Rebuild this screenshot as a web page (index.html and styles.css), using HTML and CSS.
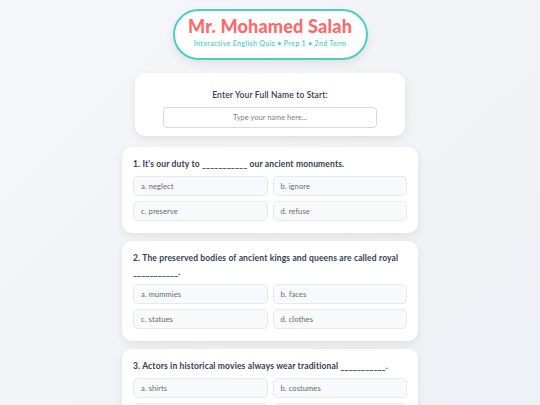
FILE: index.html
```html
<!DOCTYPE html>
<html lang="en">
<head>
<meta charset="utf-8">
<title>Mr. Mohamed Salah – Interactive English Quiz</title>
<link rel="stylesheet" href="styles.css">
</head>
<body>
<main class="page">
  <header class="brand">
    <h1 class="brand-title">Mr. Mohamed Salah</h1>
    <p class="brand-sub">Interactive English Quiz • Prep 1 • 2nd Term</p>
  </header>

  <section class="name-card">
    <label class="name-label" for="student">Enter Your Full Name to Start:</label>
    <input class="name-input" id="student" type="text" placeholder="Type your name here...">
  </section>

  <section class="q-card">
    <p class="q-text">1. It's our duty to ___________ our ancient monuments.</p>
    <div class="options">
      <div class="opt">a. neglect</div>
      <div class="opt">b. ignore</div>
      <div class="opt">c. preserve</div>
      <div class="opt">d. refuse</div>
    </div>
  </section>

  <section class="q-card">
    <p class="q-text">2. The preserved bodies of ancient kings and queens are called royal ___________.</p>
    <div class="options">
      <div class="opt">a. mummies</div>
      <div class="opt">b. faces</div>
      <div class="opt">c. statues</div>
      <div class="opt">d. clothes</div>
    </div>
  </section>

  <section class="q-card">
    <p class="q-text">3. Actors in historical movies always wear traditional ___________.</p>
    <div class="options">
      <div class="opt">a. shirts</div>
      <div class="opt">b. costumes</div>
      <div class="opt">c. hats</div>
      <div class="opt">d. shoes</div>
    </div>
  </section>
</main>
</body>
</html>
```

FILE: styles.css
```css
* { box-sizing: border-box; }

html, body {
  margin: 0;
  padding: 0;
}

body {
  background: linear-gradient(135deg, #f5f7fa 0%, #edf0f4 100%);
  min-height: 100vh;
  font-family: "Lato", "Open Sans", sans-serif;
  color: #2d3436;
}

.page {
  width: 296px;
  margin: 0 auto;
  padding-top: 9px;
  display: flex;
  flex-direction: column;
  align-items: center;
}

.brand {
  width: 195px;
  height: 51px;
  border: 2px solid #4ecdc4;
  border-radius: 26px;
  background: #ffffff;
  box-shadow: 0 4px 10px rgba(0, 0, 0, 0.08);
  text-align: center;
  padding-top: 5px;
}

.brand-title {
  margin: 0;
  font-family: "Lato", sans-serif;
  font-weight: 900;
  font-size: 18px;
  line-height: 20px;
  color: #ff6b6b;
  letter-spacing: 0.2px;
}

.brand-sub {
  margin: 2px 0 0;
  font-size: 7px;
  line-height: 10px;
  color: #4ecdc4;
  font-weight: 600;
  letter-spacing: 0.35px;
}

.name-card {
  margin-top: 13px;
  width: 270px;
  height: 63px;
  background: #ffffff;
  border-radius: 10px;
  box-shadow: 0 3px 8px rgba(0, 0, 0, 0.08);
  padding-top: 16px;
  display: flex;
  flex-direction: column;
  align-items: center;
}

.name-label {
  font-size: 8.5px;
  line-height: 12px;
  font-weight: 600;
  color: #34404f;
  margin-bottom: 6px;
  letter-spacing: 0.15px;
}

.name-input {
  width: 214px;
  height: 21px;
  border: 1px solid #d5d9de;
  border-radius: 4px;
  font-family: "Lato", sans-serif;
  font-size: 7.5px;
  text-align: center;
  color: #2d3436;
  background: #fff;
  outline: none;
}

.name-input::placeholder {
  color: #7a7f85;
}

.q-card {
  width: 296px;
  background: #ffffff;
  border-radius: 10px;
  box-shadow: 0 3px 8px rgba(0, 0, 0, 0.08);
  padding: 10px 11px 12px;
  margin-top: 8px;
}

.name-card + .q-card {
  margin-top: 11px;
}

.q-text {
  margin: 0 0 5px;
  font-size: 8.5px;
  line-height: 14px;
  font-weight: 700;
  color: #34404f;
  letter-spacing: 0.15px;
}

.options {
  display: grid;
  grid-template-columns: 1fr 1fr;
  gap: 5px;
}

.opt {
  height: 20px;
  display: flex;
  align-items: center;
  padding-left: 7px;
  background: #f8f9fa;
  border: 1px solid #e6e9ec;
  border-radius: 5px;
  font-size: 7.5px;
  color: #636a72;
  letter-spacing: 0.1px;
}
```
